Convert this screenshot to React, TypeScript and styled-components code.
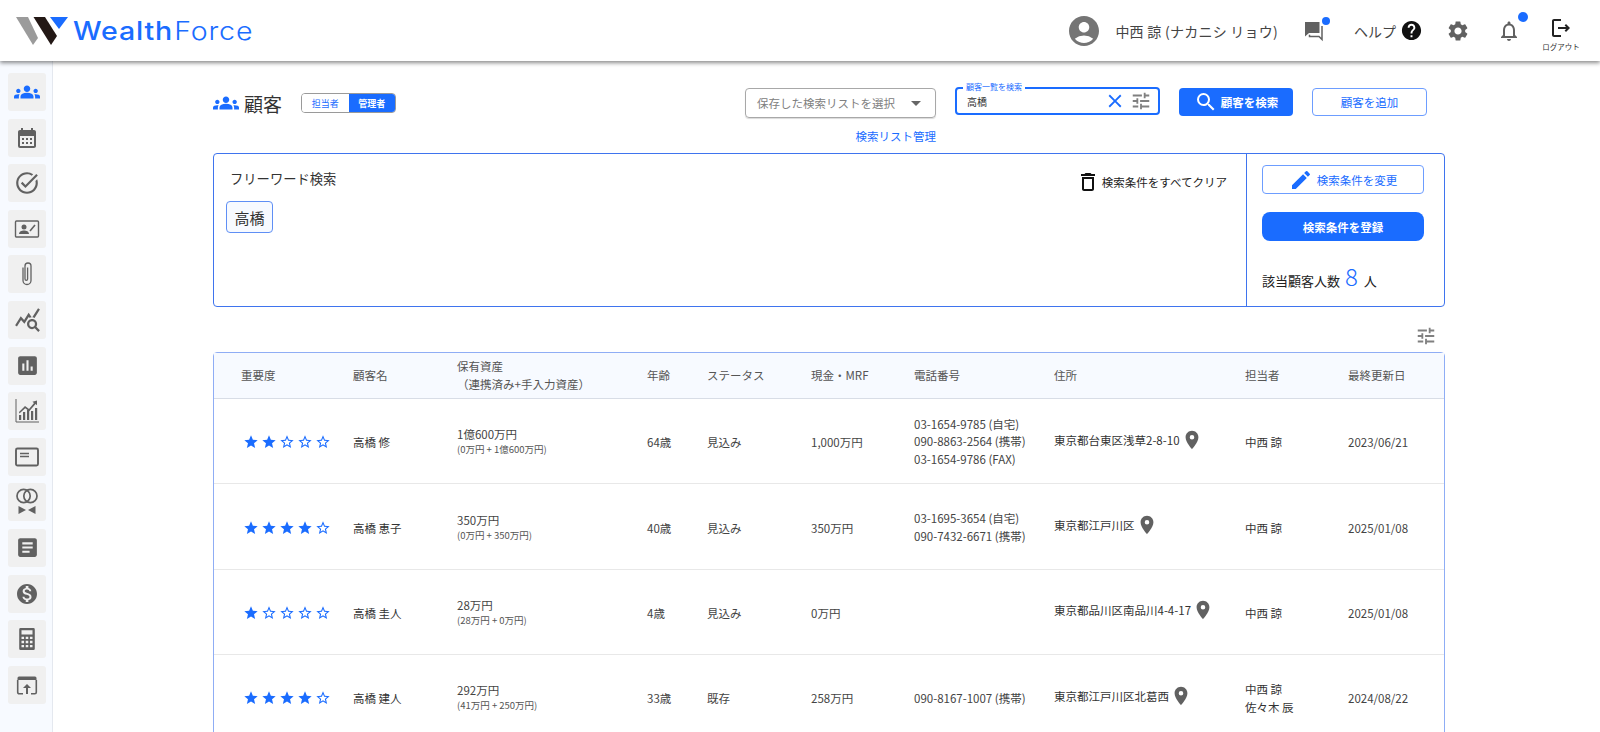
import React from "react";
import styled, { createGlobalStyle } from "styled-components";
import {
  MdAccountCircle, MdHelp, MdSettings, MdOutlineNotifications, MdOutlineLogout, MdTune, MdClose, MdSearch, MdEdit,
  MdOutlineDelete, MdLocationOn, MdStar, MdStarBorder, MdArrowDropDown, MdGroups, MdCalendarMonth, MdOutlineTaskAlt,
  MdQueryStats, MdAssessment, MdArticle, MdMonetizationOn,
} from "react-icons/md";

const BLUE = "#1a6cff";
const GRAY = "#616161";

const Global = createGlobalStyle`
  html, body { margin: 0; padding: 0; background: #fff; }
  body { font-family: "Noto Sans CJK JP", "Noto Sans", sans-serif; color: #333; }
  * { box-sizing: border-box; }
`;
const Page = styled.div`height: 732px; overflow: hidden; display: flex; flex-direction: column;`;
const Header = styled.header`
  height: 61px; flex: none; display: flex; align-items: center; background: #fff;
  box-shadow: 0 2px 4px rgba(0,0,0,.45); position: relative; z-index: 2; padding: 0 19px 0 16px;
`;
const LogoMark = styled.svg`width: 53px; height: 29px; flex: none;`;
const LogoText = styled.div`
  margin-left: 4px; color: ${BLUE}; font-family: Inter, sans-serif; font-size: 25.5px; line-height: 30px; letter-spacing: .75px; font-weight: 500;
  transform: scaleX(1.12); transform-origin: left center;
  span { font-weight: 300; margin-left: 1px; }
`;
const HeaderRight = styled.div`margin-left: auto; display: flex; align-items: center; color: #444;`;
const UserName = styled.div`font-size: 14px; letter-spacing: .25px; margin: 0 25px 0 13px; color: #444; white-space: nowrap;`;
const IconBadge = styled.div<{ $dot: number }>`
  position: relative; display: flex; color: ${GRAY};
  &::after {
    content: ""; position: absolute; border-radius: 50%; background: ${BLUE};
    width: ${(p) => p.$dot}px; height: ${(p) => p.$dot}px;
    right: ${(p) => (p.$dot > 8 ? -7 : -5)}px; top: ${(p) => (p.$dot > 8 ? -7 : -3)}px;
  }
`;
const HelpLabel = styled.div`font-size: 14px; margin: 0 4px 0 29px; letter-spacing: 0;`;
const GearWrap = styled.div`display: flex; margin: 0 27px 0 23px; color: ${GRAY};`;
const Logout = styled.div`
  display: flex; flex-direction: column; align-items: center; margin-left: 20px; color: #222; width: 40px; margin-top: 6px;
  small { font-size: 7.5px; line-height: 10px; white-space: nowrap; color: #333; margin-top: 2px; }
`;
const Body = styled.div`flex: 1; display: flex; min-height: 0;`;
const Side = styled.nav`
  width: 53px; flex: none; background: #f7faff; border-right: 1px solid #e4e8ef; padding: 12px 0 0 8px;
  display: flex; flex-direction: column; gap: 7.6px;
`;
const SideItem = styled.div<{ $active?: boolean }>`
  width: 38px; height: 38px; border-radius: 3px; background: #f0f0f0; display: flex; align-items: center; justify-content: center;
  color: ${(p) => (p.$active ? BLUE : GRAY)};
`;
const Main = styled.main`flex: 1; min-width: 0; padding: 27px 155px 0 160px;`;
const Toolbar = styled.div`height: 65px; display: flex; align-items: flex-start; padding-right: 18px;`;
const Title = styled.div`display: flex; align-items: center; height: 30px; font-size: 19px; color: #333; gap: 5px;`;
const Toggle = styled.div`
  display: flex; margin: 5px 0 0 19px; height: 20px; border: 1px solid #9a9a9a; border-radius: 4px; overflow: hidden; font-size: 9px; width: 95px;
`;
const ToggleItem = styled.div<{ $on?: boolean }>`
  flex: 1; display: flex; align-items: center; justify-content: center; font-weight: ${(p) => (p.$on ? 700 : 400)};
  background: ${(p) => (p.$on ? BLUE : "#fff")}; color: ${(p) => (p.$on ? "#fff" : BLUE)};
`;
const SelectGroup = styled.div`margin-left: auto; width: 191px; display: flex; flex-direction: column; align-items: flex-end;`;
const SelectBox = styled.div`
  width: 100%; height: 30px; border: 1px solid #a8a8a8; border-radius: 4px; display: flex; align-items: center; justify-content: space-between;
  padding: 0 13px 0 11px; font-size: 11.5px; color: #808080; box-shadow: 0 1px 1px rgba(0,0,0,.15);
`;
const ManageLink = styled.div`font-size: 11.5px; color: ${BLUE}; margin-top: 9px; line-height: 18px;`;
const SearchBox = styled.div`
  position: relative; width: 205px; height: 28px; margin: -1px 0 0 19px; border: 2px solid ${BLUE}; border-radius: 4px; display: flex; align-items: center;
  padding: 0 6px 0 10px; font-size: 10px; color: #333;
`;
const SearchLegend = styled.span`
  position: absolute; left: 6px; top: -8px; background: #fff; padding: 0 3px; font-size: 8px; line-height: 11px; color: ${BLUE};
`;
const SearchValue = styled.span`flex: 1; margin-top: 1px;`;
const SearchActions = styled.span`display: flex; align-items: center; gap: 4px; color: #808080; svg:first-child { color: ${BLUE}; }`;
const PrimaryBtn = styled.div`
  width: 114px; height: 28px; margin-left: 19px; background: ${BLUE}; color: #fff; font-size: 11.5px; font-weight: 700; border-radius: 4px;
  display: flex; align-items: center; justify-content: center; gap: 3px;
`;
const OutlineBtn = styled.div`
  width: 115px; height: 28px; margin-left: 19px; background: #fff; color: ${BLUE}; font-size: 11.5px; border: 1px solid #6d9dff; border-radius: 4px;
  display: flex; align-items: center; justify-content: center;
`;
const FilterCard = styled.section`
  height: 154px; display: flex; border: 1px solid #3f74ee; border-radius: 4px;
`;
const FilterLeft = styled.div`flex: 1; padding: 15px 19px 0 12px;`;
const FilterHead = styled.div`display: flex; justify-content: space-between; align-items: flex-start; padding-left: 4px; height: 28px;`;
const FilterTitle = styled.div`font-size: 13.3px; line-height: 20px; color: #333;`;
const ClearBtn = styled.div`display: flex; align-items: center; gap: 2px; font-size: 11.5px; color: #222; margin-top: 1px; svg { color: #111; }`;
const Chip = styled.div`
  margin-top: 4px; width: 47px; height: 32px; border: 1px solid #5f8ff5; border-radius: 4px; background: #f7faff;
  display: flex; align-items: center; justify-content: center; font-size: 15px; color: #333;
`;
const FilterRight = styled.div`width: 198px; flex: none; border-left: 1px solid #3f74ee; padding: 11px 20px 0 15px;`;
const ChangeBtn = styled.div`
  height: 29px; border: 1px solid #6d9dff; border-radius: 4px; color: ${BLUE}; font-size: 11.5px; display: flex; align-items: center; justify-content: center; gap: 4px;
`;
const RegisterBtn = styled.div`
  height: 29px; margin-top: 18px; border-radius: 8px; background: ${BLUE}; color: #fff; font-size: 11.5px; font-weight: 700; display: flex; align-items: center; justify-content: center;
`;
const CountLine = styled.div`
  margin-top: 21px; display: flex; align-items: baseline; font-size: 13px; color: #222;
  b { font-weight: 300; font-size: 24px; line-height: 28px; color: ${BLUE}; margin: 0 6px 0 5px; }
`;
const TuneRow = styled.div`height: 45px; display: flex; align-items: center; justify-content: flex-end; padding: 12px 8px 0 0; color: #808080;`;
const Table = styled.section`border: 1px solid #8fadf5; border-radius: 4px 4px 0 0;`;
const cols = "139px 103px 191px 60px 104px 103px 140px 191px 103px 1fr";
const HeadRow = styled.div`
  display: grid; grid-template-columns: ${cols}; height: 46px; padding-bottom: 2px; align-items: center; background: #f7faff; border-bottom: 1px solid #d8dde6;
  font-size: 11.5px; color: #555;
  > div:first-child { padding-left: 27px; }
`;
const HeadMulti = styled.div`line-height: 18px; span { display: block; padding-left: 1px; }`;
const Row = styled.div`
  display: grid; grid-template-columns: ${cols}; height: 85.4px; padding-top: 2px; align-items: center; border-bottom: 1px solid #e8e8e8; font-size: 11.5px; color: #444;
`;
const Stars = styled.div`display: flex; padding-left: 29px; color: ${BLUE}; gap: 2px;`;
const Name = styled.div`color: #333;`;
const Asset = styled.div`
  line-height: 16px; margin: -3px 0 0 1px;
  small { display: block; font-size: 9.5px; line-height: 12px; color: #555; margin-top: 1px; }
`;
const Phones = styled.div`line-height: 17.5px; white-space: nowrap;`;
const Addr = styled.div`display: flex; align-items: center; gap: 1px; color: #333; margin-top: -5px; svg { color: ${GRAY}; }`;
const Staff = styled.div`line-height: 18px; color: #333;`;

const ChatIcon = () => (
  <svg width="22" height="22" viewBox="0 0 22 22" fill="none">
    <path d="M2 2h14.500v11H6l-4 3.500z" fill="currentColor" />
    <path d="M19 6v13.500l-3-3H6.500v-1.700" stroke="currentColor" strokeWidth="1.500" />
  </svg>
);
const ClipIcon = () => (
  <svg width="26" height="28" viewBox="0 0 26 28" fill="none" stroke="currentColor" strokeWidth="1.300">
    <path d="M9 7.500v13a4 4 0 0 0 8 0V6a3 3 0 0 0-6 0v13a1.300 1.300 0 0 0 2.600 0V7.500" />
  </svg>
);
const ContactIcon = () => (
  <svg width="26" height="26" viewBox="0 0 26 26" fill="none">
    <rect x="1.500" y="5" width="23" height="16" rx="1" stroke="currentColor" strokeWidth="1.400" />
    <circle cx="10" cy="11" r="2.500" fill="currentColor" />
    <path d="M5 18c0-2.600 2.600-3.600 5-3.600s5 1 5 3.600z" fill="currentColor" />
    <path d="M16 15l5-6" stroke="currentColor" strokeWidth="1.600" />
  </svg>
);
const GrowthIcon = () => (
  <svg width="26" height="26" viewBox="0 0 26 26" fill="currentColor">
    <path d="M2 1v23h23" fill="none" stroke="currentColor" strokeWidth="1" />
    <path d="M5 22v-5h2.200v5zM9 22v-8h2.200v8zM13 22v-10h2.200v10zM17 22v-9h2.200v9zM21 22v-12h2.200v12z" />
    <path d="M5 14l6-6 4 3 5-6-1.600-1.200 4.600-1.300v4.800l-1.400-1.200-6.400 7.200-4-3-5.800 5.200z" />
  </svg>
);
const PanelIcon = () => (
  <svg width="24" height="24" viewBox="0 0 24 24" fill="none">
    <rect x="1" y="3.500" width="22" height="17" rx="1.500" stroke="currentColor" strokeWidth="1.900" />
    <path d="M5 8.500h9M5 11.500h9" stroke="currentColor" strokeWidth="1.500" />
  </svg>
);
const RingsIcon = () => (
  <svg width="24" height="30" viewBox="0 0 24 30" fill="none">
    <circle cx="8.600" cy="9" r="6.600" stroke="currentColor" strokeWidth="1.700" />
    <circle cx="15.400" cy="9" r="6.600" stroke="currentColor" strokeWidth="1.700" />
    <path d="M3.500 19l7.500 4-7.500 4zM20.500 19l-7.500 4 7.500 4z" fill="currentColor" />
  </svg>
);
const BrowserUpIcon = () => (
  <svg width="24" height="24" viewBox="0 0 24 24" fill="none">
    <path d="M2.500 7V5a1.500 1.500 0 0 1 1.500-1.500h16A1.500 1.500 0 0 1 21.500 5v2z" fill="currentColor" />
    <path d="M2.700 7v12.300A1.500 1.500 0 0 0 4.200 20.800H8M21.300 7v12.300a1.500 1.500 0 0 1-1.500 1.500H16" stroke="currentColor" strokeWidth="1.600" />
    <path d="M12 11l-4 4h3v6h2v-6h3z" fill="currentColor" />
  </svg>
);
const CalcIcon = () => (
  <svg width="22" height="26" viewBox="0 0 24 26" fill="currentColor">
    <path fillRule="evenodd" d="M5 1h14a1.500 1.500 0 0 1 1.500 1.500v21A1.500 1.500 0 0 1 19 25H5a1.500 1.500 0 0 1-1.500-1.500v-21A1.500 1.500 0 0 1 5 1zM6 3.500v4.500h12V3.500zM6 10.500v2.500h2.800v-2.500zM10.600 10.500v2.500h2.800v-2.500zM15.200 10.500v2.500H18v-2.500zM6 15v2.500h2.800V15zM10.600 15v2.500h2.800V15zM15.200 15v2.500H18V15zM6 19.500V22h2.800v-2.500zM10.600 19.500V22h2.800v-2.500zM15.200 19.500V22H18v-2.500z" />
  </svg>
);

const sideIcons = [
  <MdGroups size={26} key="a" />, <MdCalendarMonth size={24} key="b" />, <MdOutlineTaskAlt size={26} key="c" />, <ContactIcon key="d" />,
  <ClipIcon key="e" />, <MdQueryStats size={27} key="f" />, <MdAssessment size={25} key="g" />, <GrowthIcon key="h" />,
  <PanelIcon key="i" />, <RingsIcon key="j" />, <MdArticle size={25} key="k" />, <MdMonetizationOn size={24} key="l" />, <CalcIcon key="m" />, <BrowserUpIcon key="n" />,
];

const StarRow = ({ n }: { n: number }) => (
  <Stars>
    {[0, 1, 2, 3, 4].map((i) => (i < n ? <MdStar size={16} key={i} /> : <MdStarBorder size={16} key={i} />))}
  </Stars>
);

const rows = [
  { s: 2, name: "高橋 修", a: "1億600万円", b: "(0万円 + 1億600万円)", age: "64歳", st: "見込み", cash: "1,000万円", tel: ["03-1654-9785 (自宅)", "090-8863-2564 (携帯)", "03-1654-9786 (FAX)"], addr: "東京都台東区浅草2-8-10", staff: ["中西 諒"], d: "2023/06/21" },
  { s: 4, name: "高橋 恵子", a: "350万円", b: "(0万円 + 350万円)", age: "40歳", st: "見込み", cash: "350万円", tel: ["03-1695-3654 (自宅)", "090-7432-6671 (携帯)"], addr: "東京都江戸川区", staff: ["中西 諒"], d: "2025/01/08" },
  { s: 1, name: "高橋 圭人", a: "28万円", b: "(28万円 + 0万円)", age: "4歳", st: "見込み", cash: "0万円", tel: [], addr: "東京都品川区南品川4-4-17", staff: ["中西 諒"], d: "2025/01/08" },
  { s: 4, name: "高橋 建人", a: "292万円", b: "(41万円 + 250万円)", age: "33歳", st: "既存", cash: "258万円", tel: ["090-8167-1007 (携帯)"], addr: "東京都江戸川区北葛西", staff: ["中西 諒", "佐々木 辰"], d: "2024/08/22" },
];

export default function App() {
  return (
    <Page>
      <Global />
      <Header>
        <LogoMark viewBox="0 0 53 29">
          <path d="M0 1h12l10 21-5 7z" fill="#9b9b9b" />
          <path d="M17.500 1H29l12 19-6 9z" fill="#231815" />
          <path d="M34 1h18l-9 12z" fill={BLUE} />
        </LogoMark>
        <LogoText>Wealth<span>Force</span></LogoText>
        <HeaderRight>
          <MdAccountCircle size={36} color="#757575" />
          <UserName>中西 諒 (ナカニシ リョウ)</UserName>
          <IconBadge $dot={8}><ChatIcon /></IconBadge>
          <HelpLabel>ヘルプ</HelpLabel>
          <MdHelp size={23} color="#111" />
          <GearWrap><MdSettings size={24} /></GearWrap>
          <IconBadge $dot={10}><MdOutlineNotifications size={24} /></IconBadge>
          <Logout><MdOutlineLogout size={24} /><small>ログアウト</small></Logout>
        </HeaderRight>
      </Header>
      <Body>
        <Side>{sideIcons.map((ic, i) => <SideItem key={i} $active={i === 0}>{ic}</SideItem>)}</Side>
        <Main>
          <Toolbar>
            <Title><MdGroups size={26} color={BLUE} />顧客</Title>
            <Toggle><ToggleItem>担当者</ToggleItem><ToggleItem $on>管理者</ToggleItem></Toggle>
            <SelectGroup>
              <SelectBox>保存した検索リストを選択<MdArrowDropDown size={24} color="#666" style={{ marginRight: -6 }} /></SelectBox>
              <ManageLink>検索リスト管理</ManageLink>
            </SelectGroup>
            <SearchBox>
              <SearchLegend>顧客一覧を検索</SearchLegend>
              <SearchValue>高橋</SearchValue>
              <SearchActions><MdClose size={22} /><MdTune size={22} /></SearchActions>
            </SearchBox>
            <PrimaryBtn><MdSearch size={24} />顧客を検索</PrimaryBtn>
            <OutlineBtn>顧客を追加</OutlineBtn>
          </Toolbar>
          <FilterCard>
            <FilterLeft>
              <FilterHead>
                <FilterTitle>フリーワード検索</FilterTitle>
                <ClearBtn><MdOutlineDelete size={24} />検索条件をすべてクリア</ClearBtn>
              </FilterHead>
              <Chip>高橋</Chip>
            </FilterLeft>
            <FilterRight>
              <ChangeBtn><MdEdit size={24} color={BLUE} />検索条件を変更</ChangeBtn>
              <RegisterBtn>検索条件を登録</RegisterBtn>
              <CountLine>該当顧客人数<b>8</b>人</CountLine>
            </FilterRight>
          </FilterCard>
          <TuneRow><MdTune size={22} /></TuneRow>
          <Table>
            <HeadRow>
              <div>重要度</div><div>顧客名</div>
              <HeadMulti><span>保有資産</span><span>（連携済み+手入力資産）</span></HeadMulti>
              <div>年齢</div><div>ステータス</div><div>現金・MRF</div><div>電話番号</div><div>住所</div><div>担当者</div><div>最終更新日</div>
            </HeadRow>
            {rows.map((r) => (
              <Row key={r.name}>
                <StarRow n={r.s} />
                <Name>{r.name}</Name>
                <Asset>{r.a}<small>{r.b}</small></Asset>
                <div>{r.age}</div>
                <div>{r.st}</div>
                <div>{r.cash}</div>
                <Phones>{r.tel.map((t) => <div key={t}>{t}</div>)}</Phones>
                <Addr>{r.addr}<MdLocationOn size={22} /></Addr>
                <Staff>{r.staff.map((t) => <div key={t}>{t}</div>)}</Staff>
                <div>{r.d}</div>
              </Row>
            ))}
          </Table>
        </Main>
      </Body>
    </Page>
  );
}
